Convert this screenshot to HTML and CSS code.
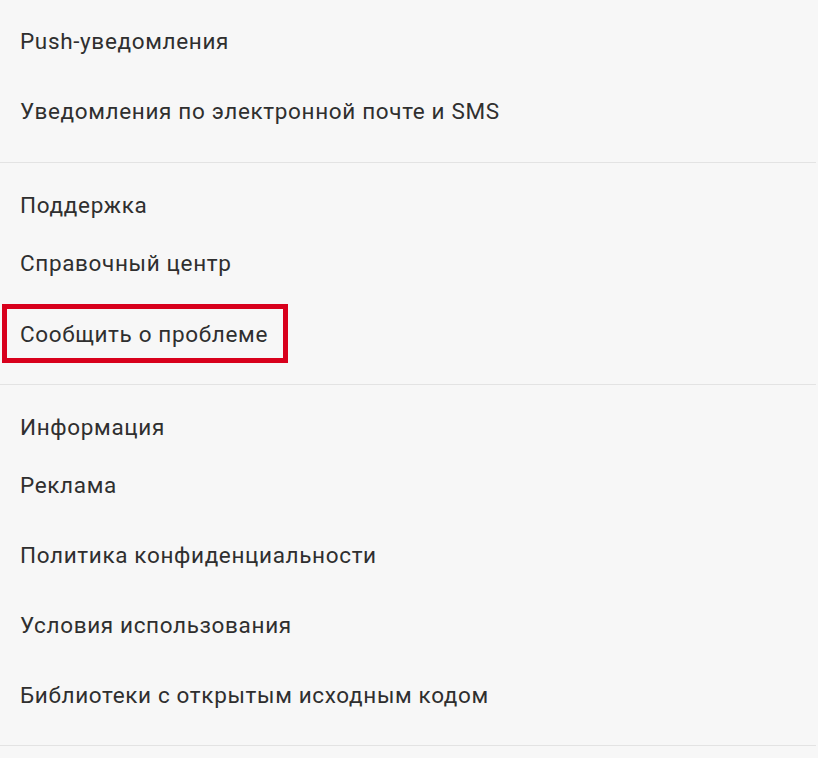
FILE: index.html
```html
<!DOCTYPE html>
<html lang="ru">
<head>
<meta charset="utf-8">
<title>Настройки</title>
<link rel="stylesheet" href="styles.css">
</head>
<body>
<div class="settings">
  <section class="group group-first">
    <div class="row">Push-уведомления</div>
    <div class="row">Уведомления по электронной почте и SMS</div>
  </section>
  <section class="group">
    <div class="header">Поддержка</div>
    <div class="row">Справочный центр</div>
    <div class="row"><span class="highlight">Сообщить о проблеме</span></div>
  </section>
  <section class="group group-last">
    <div class="header">Информация</div>
    <div class="row">Реклама</div>
    <div class="row">Политика конфиденциальности</div>
    <div class="row">Условия использования</div>
    <div class="row">Библиотеки с открытым исходным кодом</div>
  </section>
</div>
</body>
</html>
```

FILE: styles.css
```css
html, body {
  margin: 0;
  padding: 0;
  background: #f7f7f7;
}

.settings {
  font-family: Roboto, "Noto Sans", "DejaVu Sans", sans-serif;
  font-size: 22.5px;
  letter-spacing: 0.65px;
  color: #2f2f2f;
  width: 816px;
}

.group {
  padding: 19px 0 16px;
  border-bottom: 1px solid #e3e3e3;
}

.group-first {
  padding-top: 6px;
}

.group-last {
  padding-bottom: 15px;
}

.header,
.row {
  display: flex;
  align-items: center;
  padding-left: 20px;
  white-space: nowrap;
}

.header {
  height: 46px;
}

.row {
  height: 70px;
}

.highlight {
  display: flex;
  align-items: center;
  box-sizing: border-box;
  width: 286px;
  height: 59px;
  margin-left: -18px;
  margin-top: 1px;
  padding-left: 13px;
  border: 5px solid #d8001c;
}
```
